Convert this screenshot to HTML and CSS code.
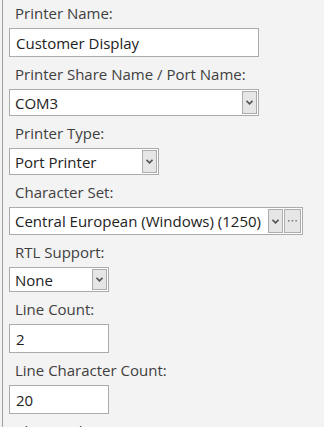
FILE: index.html
```html
<!DOCTYPE html>
<html>
<head>
<meta charset="utf-8">
<link rel="stylesheet" href="styles.css">
</head>
<body>
<div class="panel">
  <div class="field">
    <div class="label">Printer Name:</div>
    <div class="box text w250">Customer Display</div>
  </div>
  <div class="field">
    <div class="label">Printer Share Name / Port Name:</div>
    <div class="box combo w250"><span class="value">COM3</span><span class="btn"><svg viewBox="0 0 7 5" width="7" height="5"><path d="M0.5 0.8 L3.5 3.8 L6.5 0.8" fill="none" stroke="#555" stroke-width="1.6"/></svg></span></div>
  </div>
  <div class="field">
    <div class="label">Printer Type:</div>
    <div class="box combo w150"><span class="value">Port Printer</span><span class="btn"><svg viewBox="0 0 7 5" width="7" height="5"><path d="M0.5 0.8 L3.5 3.8 L6.5 0.8" fill="none" stroke="#555" stroke-width="1.6"/></svg></span></div>
  </div>
  <div class="field charset">
    <div class="label">Character Set:</div>
    <div class="box combo tall w294"><span class="value">Central European (Windows) (1250)</span><span class="btn"><svg viewBox="0 0 7 5" width="7" height="5"><path d="M0.5 0.8 L3.5 3.8 L6.5 0.8" fill="none" stroke="#555" stroke-width="1.6"/></svg></span><span class="btn dots"><svg viewBox="0 0 9 2" width="9" height="2"><rect x="0" y="0" width="1.5" height="1.5" fill="#777"/><rect x="3.7" y="0" width="1.5" height="1.5" fill="#777"/><rect x="7.4" y="0" width="1.5" height="1.5" fill="#777"/></svg></span></div>
  </div>
  <div class="field rtl">
    <div class="label">RTL Support:</div>
    <div class="box combo w100 short"><span class="value">None</span><span class="btn"><svg viewBox="0 0 7 5" width="7" height="5"><path d="M0.5 0.8 L3.5 3.8 L6.5 0.8" fill="none" stroke="#555" stroke-width="1.6"/></svg></span></div>
  </div>
  <div class="field">
    <div class="label">Line Count:</div>
    <div class="box text w100">2</div>
  </div>
  <div class="field">
    <div class="label">Line Character Count:</div>
    <div class="box text w100">20</div>
  </div>
  <div class="field">
    <div class="label">Char Replace:</div>
  </div>
</div>
</body>
</html>
```
FILE: styles.css
```css
html, body {
  margin: 0;
  padding: 0;
  background: #f3f3f3;
  height: 100%;
  overflow: hidden;
}
body {
  padding-left: 2px;
  font-family: "Segoe UI", "Open Sans", "Noto Sans", sans-serif;
  color: #333;
}
.panel {
  border-left: 1px solid #a0a0a0;
  min-height: 100%;
  padding-left: 6px;
}
.field {
  margin-bottom: 4px;
}
.rtl {
  margin-top: 2px;
}
.label {
  font-size: 15px;
  line-height: 20px;
  padding: 3px 0 5px 6px;
  color: #404040;
}
.box {
  box-sizing: border-box;
  background: #fff;
  border: 1px solid #ababab;
  font-size: 15px;
  color: #222;
  display: flex;
  align-items: center;
}
.text {
  height: 29px;
  padding-left: 6px;
}
.combo {
  height: 27px;
  padding: 1px;
  padding-left: 5px;
}
.combo.tall { height: 28px; }
.combo.short { height: 25px; }
.value {
  flex: 1;
  white-space: nowrap;
  overflow: hidden;
}
.btn {
  box-sizing: border-box;
  width: 15px;
  align-self: stretch;
  background: #e6e6e6;
  border: 1px solid #acacac;
  display: flex;
  align-items: center;
  justify-content: center;
}
.dots {
  width: 17px;
  margin-left: 1px;
  padding-bottom: 1px;
}
.w250 { width: 250px; }
.w150 { width: 150px; }
.w294 { width: 294px; }
.w100 { width: 100px; }
```
